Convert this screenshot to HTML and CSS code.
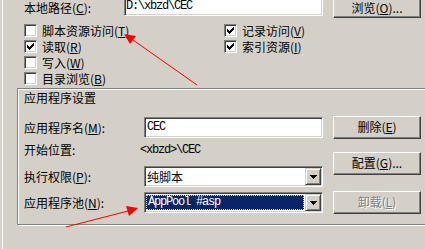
FILE: index.html
```html
<!DOCTYPE html>
<html lang="zh-CN">
<head>
    <meta charset="UTF-8">
    <title>属性 - 虚拟目录</title>
    <link rel="stylesheet" href="styles.css">
</head>
<body>
    <div class="sheet">
        <div class="tab">
            <div class="path-row">
                <span class="label">本地路径(<u>C</u>):</span>
                <div class="edit edit-wide mono">D:\xbzd\CEC</div>
                <div class="btn btn-browse">浏览(<u>O</u>)...</div>
            </div>

            <div class="checks">
                <div class="check-col">
                    <div class="check"><span class="box"></span><span class="check-text">脚本资源访问(<u>T</u>)</span></div>
                    <div class="check"><span class="box"><svg class="tick" viewBox="0 0 7 7"><path d="M0 2h1v3h-1zM1 3h1v3h-1zM2 4h1v3h-1zM3 3h1v3h-1zM4 2h1v3h-1zM5 1h1v3h-1zM6 0h1v3h-1z"/></svg></span><span class="check-text">读取(<u>R</u>)</span></div>
                    <div class="check"><span class="box"></span><span class="check-text">写入(<u>W</u>)</span></div>
                    <div class="check"><span class="box"></span><span class="check-text">目录浏览(<u>B</u>)</span></div>
                </div>
                <div class="check-col">
                    <div class="check"><span class="box"><svg class="tick" viewBox="0 0 7 7"><path d="M0 2h1v3h-1zM1 3h1v3h-1zM2 4h1v3h-1zM3 3h1v3h-1zM4 2h1v3h-1zM5 1h1v3h-1zM6 0h1v3h-1z"/></svg></span><span class="check-text">记录访问(<u>V</u>)</span></div>
                    <div class="check"><span class="box"><svg class="tick" viewBox="0 0 7 7"><path d="M0 2h1v3h-1zM1 3h1v3h-1zM2 4h1v3h-1zM3 3h1v3h-1zM4 2h1v3h-1zM5 1h1v3h-1zM6 0h1v3h-1z"/></svg></span><span class="check-text">索引资源(<u>I</u>)</span></div>
                </div>
            </div>

            <div class="group">
                <div class="fields">
                    <div class="title">应用程序设置</div>
                    <div class="field-row">
                        <span class="field-label">应用程序名(<u>M</u>):</span>
                        <div class="edit mono">CEC</div>
                    </div>
                    <div class="static-row">
                        <span class="field-label">开始位置:</span>
                        <span class="static-value mono">&lt;xbzd&gt;\CEC</span>
                    </div>
                    <div class="field-row exec-row">
                        <span class="field-label">执行权限(<u>P</u>):</span>
                        <div class="combo">
                            <span class="combo-text">纯脚本</span>
                            <span class="drop"><svg viewBox="0 0 7 4"><path d="M0 0h7l-3.5 4z"/></svg></span>
                        </div>
                    </div>
                    <div class="field-row pool-row">
                        <span class="field-label">应用程序池(<u>N</u>):</span>
                        <div class="combo">
                            <span class="combo-text selected mono">AppPool #asp</span>
                            <span class="drop"><svg viewBox="0 0 7 4"><path d="M0 0h7l-3.5 4z"/></svg></span>
                        </div>
                    </div>
                </div>
                <div class="buttons">
                    <div class="btn">删除(<u>E</u>)</div>
                    <div class="btn btn-config">配置(<u>G</u>)...</div>
                    <div class="btn btn-unload disabled">卸载(<u>L</u>)</div>
                </div>
            </div>
        </div>

        <!-- 标注箭头 -->
        <svg class="arrows" viewBox="0 0 425 249">
            <line x1="197" y1="85" x2="133" y2="40" />
            <polygon points="124,34 136,36 130,44" />
            <line x1="66" y1="227" x2="128" y2="211" />
            <polygon points="138,208 126,206 129,216" />
        </svg>
    </div>
</body>
</html>
```

FILE: styles.css
```css
* {
    margin: 0;
    padding: 0;
    box-sizing: border-box;
}

body {
    background: #d4d0c8;
    font-family: "Noto Sans CJK SC", sans-serif;
    font-size: 12px;
    color: #000;
}

.sheet {
    position: relative;
    width: 425px;
    height: 249px;
    overflow: hidden;
}

.tab {
    height: 100%;
    margin-left: 2px;
    border-left: 1px solid #fff;
    padding-left: 21px;
}

.mono {
    font-family: "Liberation Mono", monospace;
    font-size: 12px;
    letter-spacing: -1.2px;
}

/* 本地路径 (上沿被截掉) */
.path-row {
    display: flex;
    align-items: flex-start;
    height: 18px;
}

.label {
    width: 100px;
    line-height: 14px;
    margin-top: 1px;
}

.edit {
    width: 179px;
    height: 21px;
    background: #fff;
    border: 1px solid;
    border-color: #808080 #fff #fff #808080;
    box-shadow: inset 1px 1px 0 #404040, inset -1px -1px 0 #d4d0c8;
    padding-left: 2px;
    line-height: 19px;
}

.edit-wide {
    width: 199px;
    height: 16px;
    border-top: none;
    box-shadow: inset 1px 0 0 #404040, inset -1px -1px 0 #d4d0c8;
    padding-left: 1px;
    line-height: 12px;
}

.btn {
    width: 88px;
    height: 23px;
    margin-left: 10px;
    background: #d4d0c8;
    border: 1px solid;
    border-color: #fff #404040 #404040 #fff;
    box-shadow: inset -1px -1px 0 #808080;
    text-align: center;
    line-height: 20px;
}

.btn-browse {
    height: 18px;
    border-top: none;
    line-height: 15px;
}

.btn.disabled {
    color: #808080;
    text-shadow: 1px 1px 0 #fff;
}

/* 复选框 */
.checks {
    display: flex;
    margin-top: 5px;
}

.check-col {
    width: 200px;
}

.check {
    display: flex;
    align-items: flex-start;
    height: 16px;
}

.box {
    width: 13px;
    height: 13px;
    margin-top: 1px;
    margin-right: 5px;
    background: #fff;
    border: 1px solid;
    border-color: #808080 #fff #fff #808080;
    box-shadow: inset 1px 1px 0 #404040, inset -1px -1px 0 #d4d0c8;
}

.tick {
    display: block;
    width: 7px;
    height: 7px;
    margin: 2px 0 0 2px;
    shape-rendering: crispEdges;
}

.check-text {
    line-height: 15px;
}

/* 应用程序设置 */
.group {
    display: flex;
    width: 420px;
    height: 137px;
    margin-top: 1px;
    margin-left: -7px;
    padding: 2px 0 0 6px;
    border: 1px solid #808080;
    box-shadow: inset 1px 1px 0 #fff, 1px 1px 0 #fff;
}

.fields {
    width: 299px;
}

.title {
    line-height: 14px;
}

.field-row {
    display: flex;
    align-items: center;
    margin-top: 12px;
}

.exec-row {
    margin-top: 9px;
}

.pool-row {
    margin-top: 5px;
}

.field-label {
    width: 120px;
    line-height: 14px;
}

.static-row {
    display: flex;
    margin-top: 5px;
    line-height: 14px;
}

.static-value {
    margin-left: -4px;
}

.combo {
    display: flex;
    width: 179px;
    height: 21px;
    background: #fff;
    border: 1px solid;
    border-color: #808080 #fff #fff #808080;
    box-shadow: inset 1px 1px 0 #404040, inset -1px -1px 0 #d4d0c8;
    padding: 1px;
}

.combo-text {
    flex: 1;
    line-height: 17px;
    padding-left: 1px;
}

.combo-text.selected {
    margin: 1px 1px 1px 0;
    background: #0a246a;
    color: #fff;
    border: 1px dotted #f5db95;
    line-height: 13px;
    padding-left: 1px;
}

.drop {
    display: flex;
    align-items: center;
    justify-content: center;
    width: 16px;
    height: 17px;
    background: #d4d0c8;
    border: 1px solid;
    border-color: #d4d0c8 #404040 #404040 #d4d0c8;
    box-shadow: inset 1px 1px 0 #fff, inset -1px -1px 0 #808080;
}

.drop svg {
    width: 7px;
    height: 4px;
    shape-rendering: crispEdges;
}

.buttons {
    display: flex;
    flex-direction: column;
    padding-top: 25px;
}

.btn-config {
    margin-top: 13px;
}

.btn-unload {
    margin-top: 16px;
}

.arrows {
    position: absolute;
    top: 0;
    left: 0;
    width: 425px;
    height: 249px;
    pointer-events: none;
}

.arrows line {
    stroke: #f00;
    stroke-width: 1;
}

.arrows polygon {
    fill: #f00;
}
```
